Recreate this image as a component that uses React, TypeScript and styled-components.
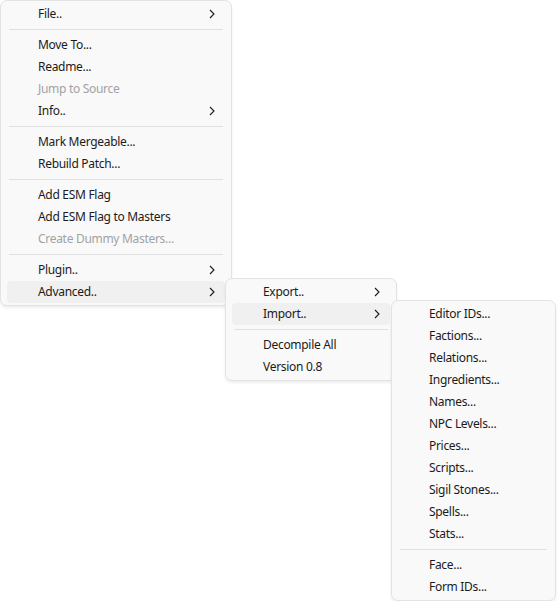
import React from "react";
import styled, { createGlobalStyle } from "styled-components";

type Entry =
  | { kind: "item"; label: string; disabled?: boolean; sub?: boolean; active?: boolean }
  | { kind: "sep" };

const item = (label: string, opts: Partial<{ disabled: boolean; sub: boolean; active: boolean }> = {}): Entry => ({
  kind: "item",
  label,
  ...opts,
});
const sep: Entry = { kind: "sep" };

const mainMenu: Entry[] = [
  item("File..", { sub: true }),
  sep,
  item("Move To..."),
  item("Readme..."),
  item("Jump to Source", { disabled: true }),
  item("Info..", { sub: true }),
  sep,
  item("Mark Mergeable..."),
  item("Rebuild Patch..."),
  sep,
  item("Add ESM Flag"),
  item("Add ESM Flag to Masters"),
  item("Create Dummy Masters...", { disabled: true }),
  sep,
  item("Plugin..", { sub: true }),
  item("Advanced..", { sub: true, active: true }),
];

const advancedMenu: Entry[] = [
  item("Export..", { sub: true }),
  item("Import..", { sub: true, active: true }),
  sep,
  item("Decompile All"),
  item("Version 0.8"),
];

const importMenu: Entry[] = [
  item("Editor IDs..."),
  item("Factions..."),
  item("Relations..."),
  item("Ingredients..."),
  item("Names..."),
  item("NPC Levels..."),
  item("Prices..."),
  item("Scripts..."),
  item("Sigil Stones..."),
  item("Spells..."),
  item("Stats..."),
  sep,
  item("Face..."),
  item("Form IDs..."),
];

const Chevron = () => (
  <svg width="6" height="10" viewBox="0 0 6 10">
    <path d="M1 1 L5 5 L1 9" fill="none" stroke="#1b1b1b" strokeWidth="1.1" />
  </svg>
);

const Menu: React.FC<{ entries: Entry[]; left: number; top: number; width: number }> = ({
  entries,
  left,
  top,
  width,
}) => (
  <Panel style={{ left, top, width }}>
    {entries.map((e, i) =>
      e.kind === "sep" ? (
        <Separator key={i} />
      ) : (
        <Row key={i} $active={e.active} $disabled={e.disabled}>
          <Label>{e.label}</Label>
          {e.sub && <Chevron />}
        </Row>
      )
    )}
  </Panel>
);

export default function App() {
  return (
    <>
      <GlobalStyle />
      <Page>
        <Menu entries={mainMenu} left={0} top={0} width={232} />
        <Menu entries={advancedMenu} left={225} top={278} width={172} />
        <Menu entries={importMenu} left={391} top={300} width={165} />
      </Page>
    </>
  );
}

const GlobalStyle = createGlobalStyle`
  html, body {
    margin: 0;
    background: #ffffff;
  }
  body {
    font-family: "Noto Sans", "Open Sans", sans-serif;
    font-size: 12px;
    letter-spacing: -0.3px;
    color: #1b1b1b;
  }
`;

const Page = styled.div`
  position: relative;
  width: 558px;
  height: 601px;
  overflow: hidden;
`;

const Panel = styled.div`
  position: absolute;
  box-sizing: border-box;
  background: #f9f9f9;
  border: 1px solid #e3e3e3;
  border-radius: 7px;
  padding: 2px 0;
  box-shadow: 0 2px 3px rgba(0, 0, 0, 0.07);
`;

const Row = styled.div<{ $active?: boolean; $disabled?: boolean }>`
  height: 22px;
  margin: 0 6px;
  padding: 0 10px 0 31px;
  border-radius: 4px;
  display: flex;
  align-items: center;
  justify-content: space-between;
  background: ${(p) => (p.$active ? "#f0f0f0" : "transparent")};
  color: ${(p) => (p.$disabled ? "#a2a2a2" : "#1b1b1b")};
`;

const Label = styled.span`
  white-space: nowrap;
  line-height: 22px;
`;

const Separator = styled.div`
  height: 1px;
  margin: 4px 8px;
  background: #e1e1e1;
`;
